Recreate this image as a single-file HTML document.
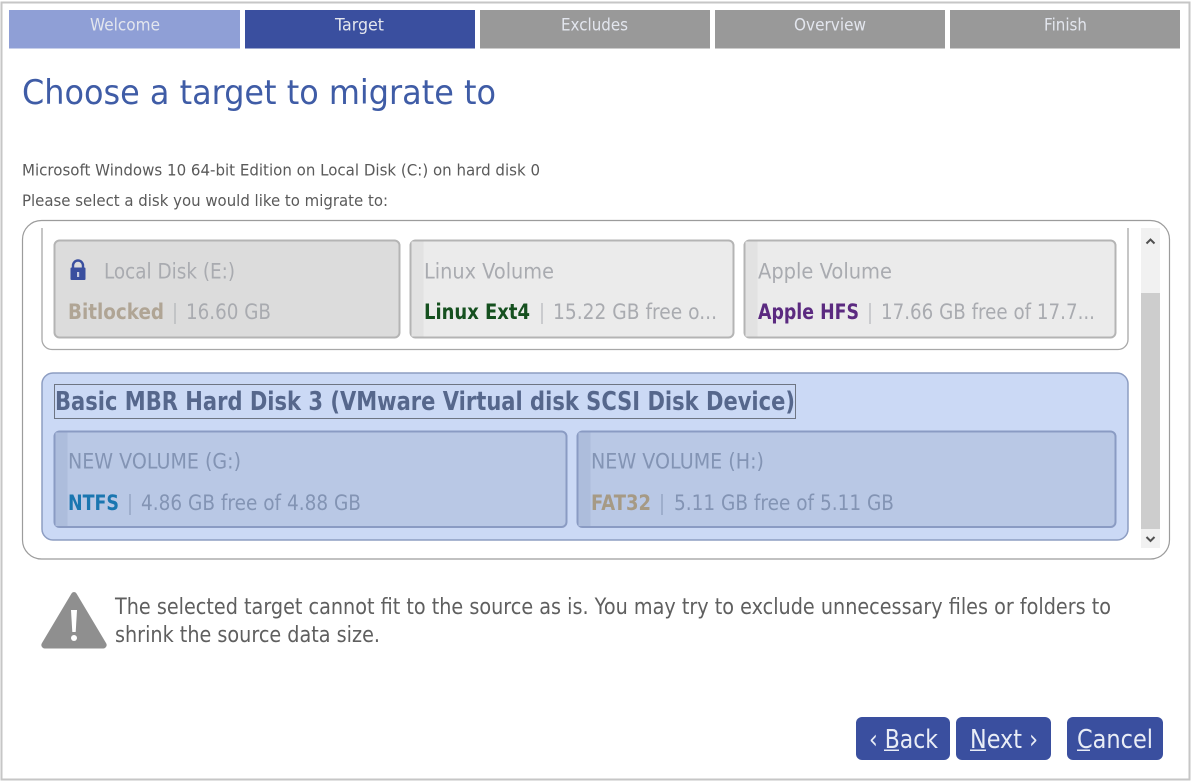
<!DOCTYPE html>
<html><head><meta charset="utf-8"><style>
html,body{margin:0;padding:0;background:#fff;width:1193px;height:782px;overflow:hidden}
svg{display:block}
text{font-family:"DejaVu Sans","Liberation Sans",sans-serif}
.t{font-size:16.5px;fill:#e3e6ee;text-anchor:start}
.p{font-size:16px;fill:#5a5a5a}
.n{font-size:21px;fill:#a9abb0}
.d{font-size:21px;fill:#a9abb0}
.b{font-size:21px;font-weight:bold}
.nb{font-size:21px;fill:#8394b4}
.w{font-size:22px;fill:#5f5f5f}
.k{font-size:26px;fill:#e9edf6}
</style></head><body>
<svg width="1193" height="782" viewBox="0 0 1193 782" xmlns="http://www.w3.org/2000/svg">
<rect x="1.5" y="2.5" width="1188" height="777" fill="#fff" stroke="#c6c6c6" stroke-width="2"/>
<rect x="9" y="10" width="231" height="38.500" fill="#8f9fd6"/>
<rect x="245" y="10" width="230" height="38.500" fill="#3a4f9f"/>
<rect x="480" y="10" width="230" height="38.500" fill="#999"/>
<rect x="715" y="10" width="230" height="38.500" fill="#999"/>
<rect x="950" y="10" width="230" height="38.500" fill="#999"/>
<text class="t" x="90" y="30.500" textLength="70" lengthAdjust="spacingAndGlyphs">Welcome</text>
<text class="t" x="335" y="30.500" textLength="49" lengthAdjust="spacingAndGlyphs">Target</text>
<text class="t" x="561" y="30.500" textLength="67" lengthAdjust="spacingAndGlyphs">Excludes</text>
<text class="t" x="794" y="30.500" textLength="72" lengthAdjust="spacingAndGlyphs">Overview</text>
<text class="t" x="1044" y="30.500" textLength="43" lengthAdjust="spacingAndGlyphs">Finish</text>
<text x="22" y="104" font-size="33.500" fill="#3f5ca6" textLength="474" lengthAdjust="spacingAndGlyphs">Choose a target to migrate to</text>
<text class="p" x="22" y="175.500" textLength="518" lengthAdjust="spacingAndGlyphs">Microsoft Windows 10 64-bit Edition on Local Disk (C:) on hard disk 0</text>
<text class="p" x="22" y="206" textLength="366" lengthAdjust="spacingAndGlyphs">Please select a disk you would like to migrate to:</text>

<rect x="22.500" y="220.500" width="1147" height="338.500" rx="19" fill="#fff" stroke="#9c9c9c" stroke-width="1.200"/>
<path d="M42 228V339.500a10 10 0 0 0 10 10H1118a10 10 0 0 0 10-10V228" fill="none" stroke="#a8a8a8" stroke-width="1.300"/>

<rect x="54.500" y="240.500" width="345" height="97" rx="5" fill="#dcdcdc" stroke="#b4b4b4" stroke-width="2"/>
<rect x="410.500" y="240.500" width="323" height="97" rx="5" fill="#ebebeb" stroke="#b4b4b4" stroke-width="2"/>
<rect x="411.500" y="241.500" width="12" height="95" fill="#e2e2e2"/>
<rect x="744.500" y="240.500" width="371" height="97" rx="5" fill="#ebebeb" stroke="#b4b4b4" stroke-width="2"/>
<rect x="745.500" y="241.500" width="12" height="95" fill="#e2e2e2"/>

<path d="M73 268V265.500a5 5 0 0 1 10 0V268" fill="none" stroke="#3a4f9f" stroke-width="2.400"/>
<rect x="70.500" y="267.500" width="15" height="12.500" rx="1" fill="#3a4f9f"/>
<rect x="77" y="272" width="2.200" height="5" fill="#c8cce0"/>
<text class="n" x="104" y="278.500" textLength="131" lengthAdjust="spacingAndGlyphs">Local Disk (E:)</text>
<text class="b" x="68" y="319" fill="#b0a595" textLength="96" lengthAdjust="spacingAndGlyphs">Bitlocked</text>
<rect x="174.500" y="303" width="1" height="21" fill="#a9abb0"/>
<text class="d" x="186" y="319" textLength="85" lengthAdjust="spacingAndGlyphs">16.60 GB</text>

<text class="n" x="424" y="278.500" textLength="130" lengthAdjust="spacingAndGlyphs">Linux Volume</text>
<text class="b" x="424" y="319" fill="#15501f" textLength="106" lengthAdjust="spacingAndGlyphs">Linux Ext4</text>
<rect x="541.500" y="303" width="1" height="21" fill="#a9abb0"/>
<text class="d" x="553" y="319" textLength="164" lengthAdjust="spacingAndGlyphs">15.22 GB free o...</text>

<text class="n" x="758" y="278.500" textLength="134" lengthAdjust="spacingAndGlyphs">Apple Volume</text>
<text class="b" x="758" y="319" fill="#5b2a80" textLength="101" lengthAdjust="spacingAndGlyphs">Apple HFS</text>
<rect x="869.500" y="303" width="1" height="21" fill="#a9abb0"/>
<text class="d" x="881" y="319" textLength="214" lengthAdjust="spacingAndGlyphs">17.66 GB free of 17.7...</text>

<rect x="42" y="373" width="1086" height="167" rx="11" fill="#cbd9f5" stroke="#8d9dc2" stroke-width="1.500"/>
<rect x="54.500" y="384.500" width="741" height="34" fill="none" stroke="#111" stroke-width="1" stroke-dasharray="1 1"/>
<text x="55" y="410" font-size="26" font-weight="bold" fill="#56678c" textLength="740" lengthAdjust="spacingAndGlyphs">Basic MBR Hard Disk 3 (VMware Virtual disk SCSI Disk Device)</text>

<rect x="54.500" y="431.500" width="512" height="95.500" rx="5" fill="#b9c8e5" stroke="#8a9bc3" stroke-width="2"/>
<rect x="55.500" y="432.500" width="12" height="93.500" fill="#adbddc"/>
<rect x="577.500" y="431.500" width="538" height="95.500" rx="5" fill="#b9c8e5" stroke="#8a9bc3" stroke-width="2"/>
<rect x="578.500" y="432.500" width="12" height="93.500" fill="#adbddc"/>

<text class="nb" x="68" y="468.500" textLength="173" lengthAdjust="spacingAndGlyphs">NEW VOLUME (G:)</text>
<text class="b" x="68" y="510" fill="#1a76b0" textLength="51" lengthAdjust="spacingAndGlyphs">NTFS</text>
<rect x="129.500" y="494" width="1" height="21" fill="#8394b4"/>
<text class="nb" x="141" y="510" textLength="220" lengthAdjust="spacingAndGlyphs">4.86 GB free of 4.88 GB</text>

<text class="nb" x="591" y="468.500" textLength="173" lengthAdjust="spacingAndGlyphs">NEW VOLUME (H:)</text>
<text class="b" x="591" y="510" fill="#a69a85" textLength="60" lengthAdjust="spacingAndGlyphs">FAT32</text>
<rect x="661.500" y="494" width="1" height="21" fill="#8394b4"/>
<text class="nb" x="674" y="510" textLength="220" lengthAdjust="spacingAndGlyphs">5.11 GB free of 5.11 GB</text>

<rect x="1141" y="228" width="19" height="320" fill="#f1f1f1"/>
<rect x="1141" y="293" width="19" height="236" fill="#cdcdcd"/>
<path d="M1146.500 243.500l4-4 4 4" fill="none" stroke="#505050" stroke-width="2"/>
<path d="M1146.500 537l4 4 4-4" fill="none" stroke="#505050" stroke-width="2"/>

<path d="M74 592a3 3 0 0 1 2.500 1.500L106 643a3.500 3.500 0 0 1-3 5.500H45a3.500 3.500 0 0 1-3-5.500L71.500 593.500A3 3 0 0 1 74 592Z" fill="#8f8f8f"/>
<path d="M71 610h6L75.700 632h-3.400Z" fill="#fff"/>
<circle cx="74" cy="638" r="3" fill="#fff"/>
<text class="w" x="115" y="614" textLength="996" lengthAdjust="spacingAndGlyphs">The selected target cannot fit to the source as is. You may try to exclude unnecessary files or folders to</text>
<text class="w" x="115" y="642" textLength="265" lengthAdjust="spacingAndGlyphs">shrink the source data size.</text>

<rect x="856" y="717" width="94" height="43" rx="6" fill="#3a4f9f"/>
<rect x="956" y="717" width="95" height="43" rx="6" fill="#3a4f9f"/>
<rect x="1067" y="717" width="96" height="43" rx="6" fill="#3a4f9f"/>
<text class="k" x="869" y="748" textLength="69" lengthAdjust="spacingAndGlyphs">‹ Back</text>
<text class="k" x="970" y="748" textLength="68" lengthAdjust="spacingAndGlyphs">Next ›</text>
<text class="k" x="1077" y="748" textLength="76" lengthAdjust="spacingAndGlyphs">Cancel</text>
<rect x="884" y="749.500" width="15" height="1.500" fill="#e9edf6"/>
<rect x="970" y="749.500" width="16" height="1.500" fill="#e9edf6"/>
<rect x="1077" y="749.500" width="13" height="1.500" fill="#e9edf6"/>
</svg>
</body></html>
